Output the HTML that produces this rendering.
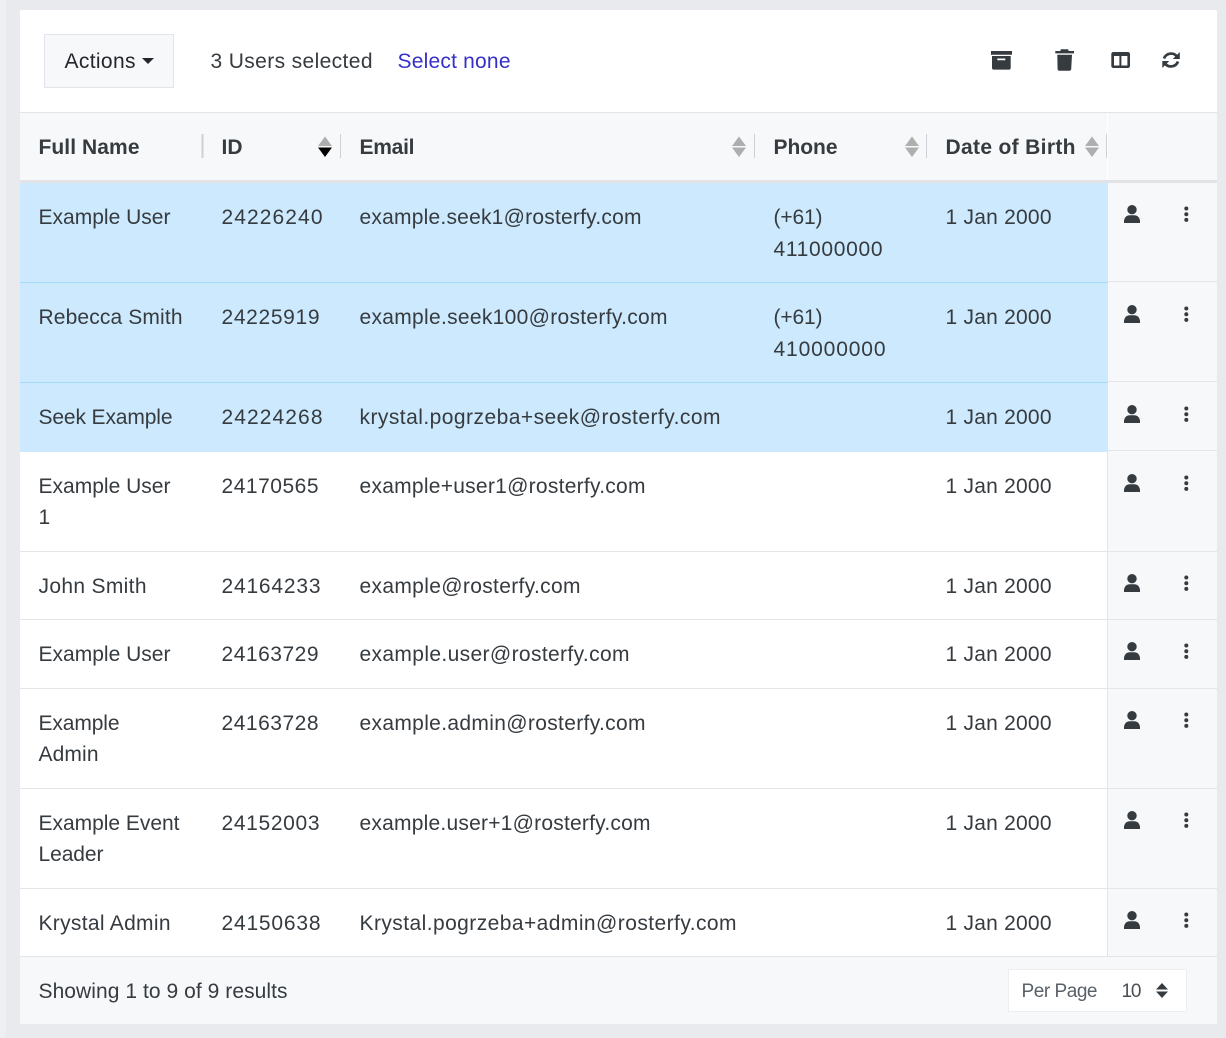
<!DOCTYPE html>
<html lang="en">
<head>
<meta charset="utf-8">
<title>Users</title>
<style>
html,body{margin:0;padding:0;width:1226px;height:1038px;overflow:hidden;background:#e9eaee}
svg{display:block}
text{font-family:"Liberation Sans",sans-serif;font-size:21px;fill:#363b40;transform:translateX(.5px)}
.b{font-weight:700;fill:#363b40}
</style>
</head>
<body>
<svg width="1226" height="1038" viewBox="0 0 1226 1038" xmlns="http://www.w3.org/2000/svg">
<defs>
<g id="person"><circle cx="8" cy="4.700" r="4.700"/><path d="M0 18v-1.800C0 13 2.400 10.200 5.600 10.200h4.800c3.200 0 5.600 2.800 5.600 6V18z"/></g>
<g id="dots"><circle cx="2" cy="2" r="2"/><circle cx="2" cy="7.700" r="2"/><circle cx="2" cy="13.400" r="2"/></g>
</defs>
<rect x="0" width="6" height="1038" fill="#eeeff2"/>
<rect x="20" y="10" width="1197" height="1014" rx="2" fill="#fff"/>
<rect x="44.500" y="34.500" width="129" height="53" fill="#f7f8fa" stroke="#e1e4ea"/>
<text x="64" y="68" textLength="71" style="fill:#23272b">Actions</text>
<path d="M142 58h12l-6 6z" fill="#23272b"/>
<text x="210" y="68" textLength="162">3 Users selected</text>
<text x="397" y="68" textLength="113" style="fill:#3730c8">Select none</text>

<g fill="#363b40">
<path d="M991 51h21v3.800h-21z"/>
<path d="M992 56h18.700v12c0 .9-.7 1.600-1.600 1.600h-15.500c-.9 0-1.600-.7-1.600-1.600zM997.300 58.500v1.800h8v-1.800z" fill-rule="evenodd"/>
<path d="M1055.300 51h5l.6-1.700h7.200l.6 1.700h5.300v2.400h-18.700z"/>
<path d="M1057.300 54.700h14.700l-.8 14.600c-.1.800-.7 1.400-1.500 1.400h-10.600c-.8 0-1.400-.6-1.500-1.400z"/>
<path d="M1113.300 52h14.700c1.100 0 2 .9 2 2v12c0 1.100-.9 2-2 2h-14.700c-1.100 0-2-.9-2-2V54c0-1.100.9-2 2-2zm.7 4v9.500h5.400V56zm7.400 0v9.500h6V56z" fill-rule="evenodd"/>
</g>
<g fill="none" stroke="#363b40" stroke-width="2.700">
<path d="M1164 58.500a7.500 7.500 0 0 1 13-2"/>
<path d="M1178 61.500a7.500 7.500 0 0 1-13 2"/>
</g>
<g fill="#363b40"><path d="M1179.800 52v7h-7zM1162.300 68v-7h7z"/></g>

<rect x="20" y="112" width="1197" height="69" fill="#f7f8fa"/>
<rect x="20" y="112" width="1197" height="1" fill="#e2e4ea"/>
<rect x="20" y="180" width="1197" height="3" fill="#e2e3e7"/>
<rect x="1107" y="113" width="1" height="67" fill="#fff"/>
<g fill="#cdd1d5">
<rect x="201.500" y="134" width="2" height="24"/>
<rect x="340" y="134" width="1" height="24"/>
<rect x="754" y="134" width="1" height="24"/>
<rect x="926" y="134" width="1" height="24"/>
<rect x="1106" y="134" width="1" height="24"/>
</g>
<text class="b" x="38" y="154" textLength="101">Full Name</text>
<text class="b" x="221" y="154" textLength="21">ID</text>
<text class="b" x="359" y="154" textLength="55">Email</text>
<text class="b" x="773" y="154" textLength="64">Phone</text>
<text class="b" x="945" y="154" textLength="130">Date of Birth</text>
<g fill="#aeaeae">
<path d="M318 146l7-9.500 7 9.500z"/>
<path d="M732 146l7-9.500 7 9.500zM732 147.500l7 9.500 7-9.500z"/>
<path d="M905 146l7-9.500 7 9.500zM905 147.500l7 9.500 7-9.500z"/>
<path d="M1085 146l7-9.500 7 9.500zM1085 147.500l7 9.500 7-9.500z"/>
</g>
<path d="M318 147.500l7 9.500 7-9.500z" fill="#000"/>

<rect x="20" y="183" width="1088" height="99" fill="#cce9fd"/>
<rect x="20" y="282" width="1088" height="1" fill="#a6d8fa"/>
<rect x="20" y="283" width="1088" height="99" fill="#cce9fd"/>
<rect x="20" y="382" width="1088" height="1" fill="#a6d8fa"/>
<rect x="20" y="383" width="1088" height="69" fill="#cce9fd"/>

<rect x="1108" y="183" width="109" height="773" fill="#f7f8fa"/>
<rect x="1107" y="452" width="1" height="504" fill="#e2e4e8"/>
<g fill="#e4e5e9">
<rect x="1108" y="281" width="109" height="1"/>
<rect x="1108" y="381" width="109" height="1"/>
<rect x="1108" y="450" width="109" height="1"/>
<rect x="20" y="551" width="1197" height="1"/>
<rect x="20" y="619" width="1197" height="1"/>
<rect x="20" y="688" width="1197" height="1"/>
<rect x="20" y="788" width="1197" height="1"/>
<rect x="20" y="888" width="1197" height="1"/>
</g>

<text x="38" y="224" textLength="132">Example User</text>
<text x="221" y="224" textLength="101">24226240</text>
<text x="359" y="224" textLength="282">example.seek1@rosterfy.com</text>
<text x="773" y="224" textLength="49">(+61)</text>
<text x="773" y="256" textLength="109">411000000</text>
<text x="945" y="224" textLength="106">1 Jan 2000</text>

<text x="38" y="324" textLength="144">Rebecca Smith</text>
<text x="221" y="324" textLength="98">24225919</text>
<text x="359" y="324" textLength="308">example.seek100@rosterfy.com</text>
<text x="773" y="324" textLength="49">(+61)</text>
<text x="773" y="356" textLength="112">410000000</text>
<text x="945" y="324" textLength="106">1 Jan 2000</text>

<text x="38" y="424" textLength="134">Seek Example</text>
<text x="221" y="424" textLength="101">24224268</text>
<text x="359" y="424" textLength="361">krystal.pogrzeba+seek@rosterfy.com</text>
<text x="945" y="424" textLength="106">1 Jan 2000</text>

<text x="38" y="493" textLength="132">Example User</text>
<text x="38" y="524" textLength="9">1</text>
<text x="221" y="493" textLength="97">24170565</text>
<text x="359" y="493" textLength="286">example+user1@rosterfy.com</text>
<text x="945" y="493" textLength="106">1 Jan 2000</text>

<text x="38" y="593" textLength="108">John Smith</text>
<text x="221" y="593" textLength="99">24164233</text>
<text x="359" y="593" textLength="221">example@rosterfy.com</text>
<text x="945" y="593" textLength="106">1 Jan 2000</text>

<text x="38" y="661" textLength="132">Example User</text>
<text x="221" y="661" textLength="97">24163729</text>
<text x="359" y="661" textLength="270">example.user@rosterfy.com</text>
<text x="945" y="661" textLength="106">1 Jan 2000</text>

<text x="38" y="730" textLength="81">Example</text>
<text x="38" y="761" textLength="60">Admin</text>
<text x="221" y="730" textLength="97">24163728</text>
<text x="359" y="730" textLength="286">example.admin@rosterfy.com</text>
<text x="945" y="730" textLength="106">1 Jan 2000</text>

<text x="38" y="830" textLength="141">Example Event</text>
<text x="38" y="861" textLength="65">Leader</text>
<text x="221" y="830" textLength="98">24152003</text>
<text x="359" y="830" textLength="291">example.user+1@rosterfy.com</text>
<text x="945" y="830" textLength="106">1 Jan 2000</text>

<text x="38" y="930" textLength="132">Krystal Admin</text>
<text x="221" y="930" textLength="99">24150638</text>
<text x="359" y="930" textLength="377">Krystal.pogrzeba+admin@rosterfy.com</text>
<text x="945" y="930" textLength="106">1 Jan 2000</text>

<g fill="#363b40">
<use href="#person" x="1124" y="205"/><use href="#dots" x="1184.300" y="206.500"/>
<use href="#person" x="1124" y="305"/><use href="#dots" x="1184.300" y="306.500"/>
<use href="#person" x="1124" y="405"/><use href="#dots" x="1184.300" y="406.500"/>
<use href="#person" x="1124" y="474"/><use href="#dots" x="1184.300" y="475.500"/>
<use href="#person" x="1124" y="574"/><use href="#dots" x="1184.300" y="575.500"/>
<use href="#person" x="1124" y="642"/><use href="#dots" x="1184.300" y="643.500"/>
<use href="#person" x="1124" y="711"/><use href="#dots" x="1184.300" y="712.500"/>
<use href="#person" x="1124" y="811"/><use href="#dots" x="1184.300" y="812.500"/>
<use href="#person" x="1124" y="911"/><use href="#dots" x="1184.300" y="912.500"/>
</g>

<rect x="20" y="956" width="1197" height="68" fill="#f7f8fa"/>
<rect x="20" y="956" width="1197" height="1" fill="#e2e4ea"/>
<text x="38" y="998" textLength="249">Showing 1 to 9 of 9 results</text>
<rect x="1008.500" y="969.500" width="178" height="42" fill="#fff" stroke="#eceef1"/>
<text x="1021" y="997" textLength="76" style="font-size:19px;fill:#596068">Per Page</text>
<text x="1121" y="997" textLength="20" style="font-size:19px;fill:#4a4f55">10</text>
<path d="M1156 989.500l6-6.500 6 6.500zM1156 991.500l6 6.500 6-6.500z" fill="#363b40"/>
</svg>
</body>
</html>
